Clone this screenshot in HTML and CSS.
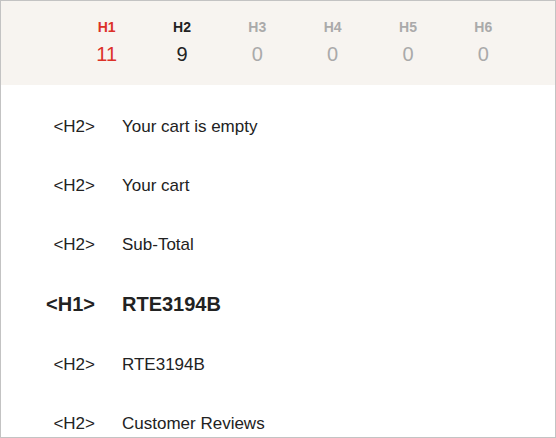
FILE: index.html
```html
<!DOCTYPE html>
<html lang="en">
<head>
  <meta charset="UTF-8">
  <title>Headings</title>
  <link rel="stylesheet" href="styles.css">
</head>
<body>
  <div class="panel">
    <div class="counts">
      <div class="count is-used h1"><span class="count-label">H1</span><span class="count-num">11</span></div>
      <div class="count is-used"><span class="count-label">H2</span><span class="count-num">9</span></div>
      <div class="count"><span class="count-label">H3</span><span class="count-num">0</span></div>
      <div class="count"><span class="count-label">H4</span><span class="count-num">0</span></div>
      <div class="count"><span class="count-label">H5</span><span class="count-num">0</span></div>
      <div class="count"><span class="count-label">H6</span><span class="count-num">0</span></div>
    </div>
    <ul class="outline">
      <li class="heading"><span class="tag">&lt;H2&gt;</span><span class="text">Your cart is empty</span></li>
      <li class="heading"><span class="tag">&lt;H2&gt;</span><span class="text">Your cart</span></li>
      <li class="heading"><span class="tag">&lt;H2&gt;</span><span class="text">Sub-Total</span></li>
      <li class="heading level-1"><span class="tag">&lt;H1&gt;</span><span class="text">RTE3194B</span></li>
      <li class="heading"><span class="tag">&lt;H2&gt;</span><span class="text">RTE3194B</span></li>
      <li class="heading"><span class="tag">&lt;H2&gt;</span><span class="text">Customer Reviews</span></li>
    </ul>
  </div>
</body>
</html>
```

FILE: styles.css
```css
html, body { margin: 0; padding: 0; background: #fff; }
body { font-family: 'Liberation Sans', Arial, sans-serif; color: #222; }
.panel {
  width: 556px;
  height: 438px;
  box-sizing: border-box;
  border: 1px solid #c3c3c3;
  overflow: hidden;
}
.counts {
  display: flex;
  background: #f7f4f0;
  padding: 18px 34px 19px 68px;
}
.count {
  flex: 1;
  display: flex;
  flex-direction: column;
  align-items: center;
  color: #aaa;
}
.count.is-used { color: #222; }
.count.h1 { color: #dc3128; }
.count-label { font-size: 14px; font-weight: bold; line-height: 16px; margin-bottom: 8px; }
.count-num { font-size: 20px; line-height: 23px; }
.outline { list-style: none; margin: 0; padding: 13px 0 0 0; }
.heading {
  display: grid;
  grid-template-columns: 94px 1fr;
  column-gap: 27px;
  align-items: baseline;
  padding: 19.35px 0;
  font-size: 17px;
}
.tag { text-align: right; }
.heading.level-1 { font-size: 20px; font-weight: bold; }
```
